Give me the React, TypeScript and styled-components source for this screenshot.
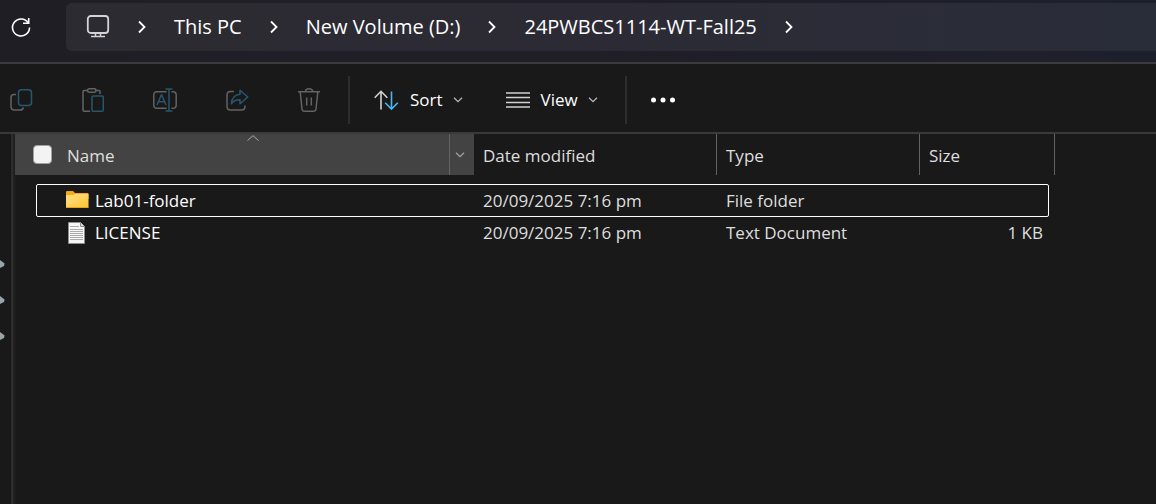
import React from 'react';
import styled, { createGlobalStyle } from 'styled-components';

const GlobalStyle = createGlobalStyle`
  * { box-sizing: border-box; }
  html, body, #root { height: 100%; }
  body {
    margin: 0;
    background: #191919;
    color: #fff;
    font-family: 'Open Sans', 'Noto Sans', sans-serif;
    overflow: hidden;
  }
  button {
    margin: 0;
    padding: 0;
    border: 0;
    background: none;
    color: inherit;
    font: inherit;
    white-space: nowrap;
  }
  svg { display: block; flex: none; }
`;

const Window = styled.div`
  display: flex;
  flex-direction: column;
  min-height: 100%;
`;

const TopBar = styled.header`
  display: flex;
  padding: 3px 0 11px 9px;
  background: linear-gradient(90deg, #201e25 0%, #201e27 50%, #1d202c 100%);
  border-bottom: 2px solid #3b3a3d;
`;

const RefreshButton = styled.button`
  width: 57px;
  height: 48px;
`;

const AddressBar = styled.nav`
  flex: 1;
  display: flex;
  align-items: center;
  gap: 28px;
  height: 48px;
  padding-left: 20px;
  border-radius: 6px 0 0 6px;
  background: linear-gradient(90deg, #2c2b31 0%, #2c2b35 50%, #292d39 100%);
`;

const Crumb = styled.button`
  font-size: 20px;
  line-height: 26px;
`;

const Toolbar = styled.div`
  display: flex;
  align-items: center;
  height: 70px;
  padding-top: 4px;
  border-bottom: 2px solid #3a3a3a;
`;

const ToolGroup = styled.div`
  display: flex;
  gap: 48px;
  padding: 0 27px 0 9px;
`;

const ToolButton = styled.button`
  display: block;
  color: #636363;
`;

const Divider = styled.span`
  width: 2px;
  height: 48px;
  background: #2d2d2d;
`;

const MenuGroup = styled.div`
  display: flex;
  gap: 42px;
  padding: 0 27px 0 24px;
`;

const MenuButton = styled.button`
  display: flex;
  align-items: center;
  gap: 10px;
  font-size: 17px;
  line-height: 24px;
`;

const MoreButton = styled.button`
  margin-left: 24px;
`;

const Content = styled.div`
  flex: 1;
  display: flex;
`;

const Sidebar = styled.aside`
  width: 10px;
  display: flex;
  flex-direction: column;
  gap: 28px;
  padding-top: 126px;
`;

const Splitter = styled.div`
  width: 5px;
  background: #222;
  border-left: 1px solid #151515;
  border-right: 1px solid #202020;
  box-shadow: inset 1px 0 #2d2d2d, inset 2px 0 #2d2d2d;
`;

const FileTable = styled.table`
  display: block;
  width: 1040px;
  font-size: 17px;
  line-height: 24px;
`;

const Head = styled.thead`
  display: block;
`;

const Body = styled.tbody`
  display: block;
  padding: 9px 6px 0 21px;
`;

const HeadRow = styled.tr`
  display: grid;
  grid-template-columns: 459px 243px 203px 135px;
  height: 41px;
`;

const HeadCell = styled.th<{ $sorted?: boolean }>`
  position: relative;
  display: flex;
  align-items: center;
  padding: 2px 0 0 ${(p) => (p.$sorted ? 18 : 9)}px;
  border-right: ${(p) => (p.$sorted ? '0' : '1px solid #636363')};
  background: ${(p) => (p.$sorted ? '#434343' : 'transparent')};
  color: #dedede;
  font-weight: 400;
  text-align: left;
`;

const SelectAll = styled.input`
  appearance: none;
  width: 19px;
  height: 19px;
  margin: 0 15px 3px 0;
  border: 1px solid #a0a0a0;
  border-radius: 4px;
  background: #f3f3f3;
`;

const SortMark = styled.span`
  position: absolute;
  top: 1px;
  left: 50%;
`;

const FilterButton = styled.button`
  display: flex;
  align-items: center;
  align-self: stretch;
  width: 25px;
  margin: -2px 0 0 auto;
  padding-left: 5px;
  border-left: 1px solid #636363;
`;

const Row = styled.tr<{ $focused?: boolean }>`
  display: grid;
  grid-template-columns: 437px 243px 203px 1fr;
  height: ${(p) => (p.$focused ? 33 : 32)}px;
  border: 1px solid ${(p) => (p.$focused ? '#fff' : 'transparent')};
  border-radius: 2px;
`;

const Cell = styled.td<{ $name?: boolean; $end?: boolean }>`
  display: flex;
  align-items: center;
  justify-content: ${(p) => (p.$end ? 'flex-end' : 'flex-start')};
  gap: 6px;
  padding: 0 5px 0 ${(p) => (p.$name ? 29 : 9)}px;
  color: ${(p) => (p.$name ? '#fff' : '#dedede')};
`;

const Chevron = () => (
  <svg width="8" height="14" viewBox="0 0 8 14" fill="none" stroke="#fff" strokeWidth="1.8">
    <path d="M1 1.5 6.5 7 1 12.5" />
  </svg>
);

const DownChevron = ({ color = '#b5b5b5' }: { color?: string }) => (
  <svg width="10" height="6" viewBox="0 0 10 6" fill="none" stroke={color} strokeWidth="1.3">
    <path d="M1 .7 5 4.700 9 .7" />
  </svg>
);

const RefreshIcon = () => (
  <svg width="24" height="24" viewBox="0 0 24 24" fill="none" stroke="#fff" strokeWidth="1.6">
    <path d="M19.2 8A8.5 8.5 0 1 0 20.5 12.5M19.7 3V8.2H14" />
  </svg>
);

const MonitorIcon = () => (
  <svg width="24" height="26" viewBox="0 0 24 26" fill="none" stroke="#d6d2d6" strokeWidth="1.8">
    <rect x="1.800" y="2" width="20.400" height="17" rx="3" />
    <path d="M9.500 19v3.500M14.500 19v3.500M5 22.500h14" strokeWidth="1.500" />
  </svg>
);

const accent = '#27576f';

const CopyIcon = () => (
  <svg width="24" height="24" viewBox="0 0 24 24" fill="none" stroke="currentColor" strokeWidth="1.5">
    <path d="M7 6.5H5Q2 6.5 2 9.5V18.5Q2 22 5.5 22H11Q14 22 14.5 19.5" />
    <rect x="9.5" y="1.7" width="13" height="15.8" rx="3" stroke={accent} />
  </svg>
);

const PasteIcon = () => (
  <svg width="24" height="24" viewBox="0 0 24 24" fill="none" stroke="currentColor" strokeWidth="1.5">
    <path d="M6 2.5H3Q2 2.5 2 3.5V22Q2 23.2 3.2 23.2H9M14.500 2.5H18q1 0 1 1v2.500" />
    <rect x="6.5" y=".8" width="8.500" height="3.4" rx="1.7" />
    <rect x="11" y="8" width="11.3" height="15.2" rx="1.3" stroke={accent} />
  </svg>
);

const RenameIcon = () => (
  <svg width="24" height="24" viewBox="0 0 24 24" fill="none" stroke="currentColor" strokeWidth="1.5">
    <path d="M13.5 3.7H4Q.8 3.7.8 7v10q0 3.3 3.2 3.3h9.5M18.5 3.7H20q3.2 0 3.2 3.3v10q0 3.3-3.2 3.3h-1.5" />
    <path d="M4 17 8.3 7h.4L13 17M5.6 13.7h5.8M12.5 1h7M12.5 23h7M16 1v22" stroke={accent} />
  </svg>
);

const ShareIcon = () => (
  <svg width="24" height="24" viewBox="0 0 24 24" fill="none" stroke="currentColor" strokeWidth="1.5" strokeLinejoin="round">
    <path d="M9 3.5H5.5Q2 3.5 2 7V18.5Q2 22 5.5 22H16.5Q20 22 20 18.5V17.5" />
    <path d="M15 2.3 22.8 9 15 15.8V11.8Q9.5 11.5 6.4 15.8Q7 6.8 15 6.2Z" stroke={accent} />
  </svg>
);

const TrashIcon = () => (
  <svg width="24" height="24" viewBox="0 0 24 24" fill="none" stroke="currentColor" strokeWidth="1.5">
    <path d="M1 3.8H23M8.2 3.8Q8.5.8 12 .8T15.8 3.8M3.2 4 5 21Q5.3 23.2 7.5 23.2h9q2.200 0 2.500-2.200L20.800 4M9.700 9.500v8M14.300 9.500v8" />
  </svg>
);

const SortIcon = () => (
  <svg width="26" height="24" viewBox="0 0 26 24" fill="none" strokeWidth="1.6">
    <path d="M7 21.500V3.500M.7 9.700 7 3.300 13.300 9.700" stroke="#d2d2d2" />
    <path d="M17.500 3.500V21M11.200 14.700 17.500 21 23.800 14.700" stroke="#4cb5f0" />
  </svg>
);

const ViewIcon = () => (
  <svg width="26" height="24" viewBox="0 0 26 24" stroke="#d0d0d0" strokeWidth="1.5">
    <path d="M1 5H25M1 9.500H25M1 14.500H25M1 19H25" />
  </svg>
);

const MoreIcon = () => (
  <svg width="26" height="6" viewBox="0 0 26 6" fill="#fff">
    <circle cx="2.500" cy="3" r="2.500" />
    <circle cx="12" cy="3" r="2.500" />
    <circle cx="21.500" cy="3" r="2.500" />
  </svg>
);

const PinIcon = () => (
  <svg width="5" height="8" viewBox="0 0 5 8" fill="#98a3aa">
    <path d="M0 0 4.600 3.500 4 6 0 8Z" />
  </svg>
);

const FolderIcon = () => (
  <svg width="23" height="22" viewBox="0 0 23 22">
    <defs>
      <linearGradient id="folder" x1="0" y1="0" x2="1" y2="1">
        <stop offset="0" stopColor="#ffe08a" />
        <stop offset="1" stopColor="#fdc52f" />
      </linearGradient>
    </defs>
    <path d="M0 2Q0 1 1 1H7L9 3H21.500Q22.500 3 22.500 4V9H0Z" fill="#f9a916" />
    <path d="M0 6Q0 5 1 5H7L9 4H22.500V17Q22.500 18 21.500 18H1Q0 18 0 17Z" fill="url(#folder)" />
    <path d="M0 17.500H22.500" stroke="#e8a51c" />
  </svg>
);

const TextFileIcon = () => (
  <svg width="23" height="22" viewBox="0 0 23 22">
    <path d="M2.500.5H14.500L18.500 4.500V21.500H2.500Z" fill="#f6f6f6" stroke="#8d8d8d" />
    <path d="M14.500.5V4.500H18.500" fill="#ddd" stroke="#8d8d8d" />
    <path d="M4 4.500H13M4 7.500H17M4 9.500H17M4 11.500H17M4 13.500H17M4 15.500H17M4 17.500H17" stroke="#aaa" />
  </svg>
);

const crumbs = ['This PC', 'New Volume (D:)', '24PWBCS1114-WT-Fall25'];

const tools = [
  { label: 'Copy', Icon: CopyIcon },
  { label: 'Paste', Icon: PasteIcon },
  { label: 'Rename', Icon: RenameIcon },
  { label: 'Share', Icon: ShareIcon },
  { label: 'Delete', Icon: TrashIcon },
];

const files = [
  { name: 'Lab01-folder', date: '20/09/2025 7:16 pm', type: 'File folder', size: '', Icon: FolderIcon },
  { name: 'LICENSE', date: '20/09/2025 7:16 pm', type: 'Text Document', size: '1 KB', Icon: TextFileIcon },
];

export default function App() {
  return (
    <Window>
      <GlobalStyle />
      <TopBar>
        <RefreshButton aria-label="Refresh">
          <RefreshIcon />
        </RefreshButton>
        <AddressBar aria-label="Address">
          <Crumb aria-label="Computer">
            <MonitorIcon />
          </Crumb>
          <Chevron />
          {crumbs.map((crumb) => (
            <React.Fragment key={crumb}>
              <Crumb>{crumb}</Crumb>
              <Chevron />
            </React.Fragment>
          ))}
        </AddressBar>
      </TopBar>
      <Toolbar role="toolbar">
        <ToolGroup>
          {tools.map(({ label, Icon }) => (
            <ToolButton key={label} aria-label={label}>
              <Icon />
            </ToolButton>
          ))}
        </ToolGroup>
        <Divider />
        <MenuGroup>
          <MenuButton>
            <SortIcon />
            Sort
            <DownChevron />
          </MenuButton>
          <MenuButton>
            <ViewIcon />
            View
            <DownChevron />
          </MenuButton>
        </MenuGroup>
        <Divider />
        <MoreButton aria-label="See more">
          <MoreIcon />
        </MoreButton>
      </Toolbar>
      <Content>
        <Sidebar>
          <PinIcon />
          <PinIcon />
          <PinIcon />
        </Sidebar>
        <Splitter />
        <main>
          <FileTable cellSpacing={0}>
            <Head>
              <HeadRow>
                <HeadCell $sorted aria-sort="ascending">
                  <SelectAll type="checkbox" id="select-all" aria-label="Select all" />
                  <label htmlFor="select-all">Name</label>
                  <SortMark>
                    <svg width="16" height="6" viewBox="0 0 16 6" fill="none" stroke="#a8a8a8">
                      <path d="M2.500 5.500 8 .7 13.500 5.500" />
                    </svg>
                  </SortMark>
                  <FilterButton aria-label="Filter by name">
                    <DownChevron color="#a0a0a0" />
                  </FilterButton>
                </HeadCell>
                <HeadCell>Date modified</HeadCell>
                <HeadCell>Type</HeadCell>
                <HeadCell>Size</HeadCell>
              </HeadRow>
            </Head>
            <Body>
              {files.map(({ name, date, type, size, Icon }, i) => (
                <Row key={name} $focused={i === 0}>
                  <Cell $name>
                    <Icon />
                    {name}
                  </Cell>
                  <Cell>{date}</Cell>
                  <Cell>{type}</Cell>
                  <Cell $end>{size}</Cell>
                </Row>
              ))}
            </Body>
          </FileTable>
        </main>
      </Content>
    </Window>
  );
}
